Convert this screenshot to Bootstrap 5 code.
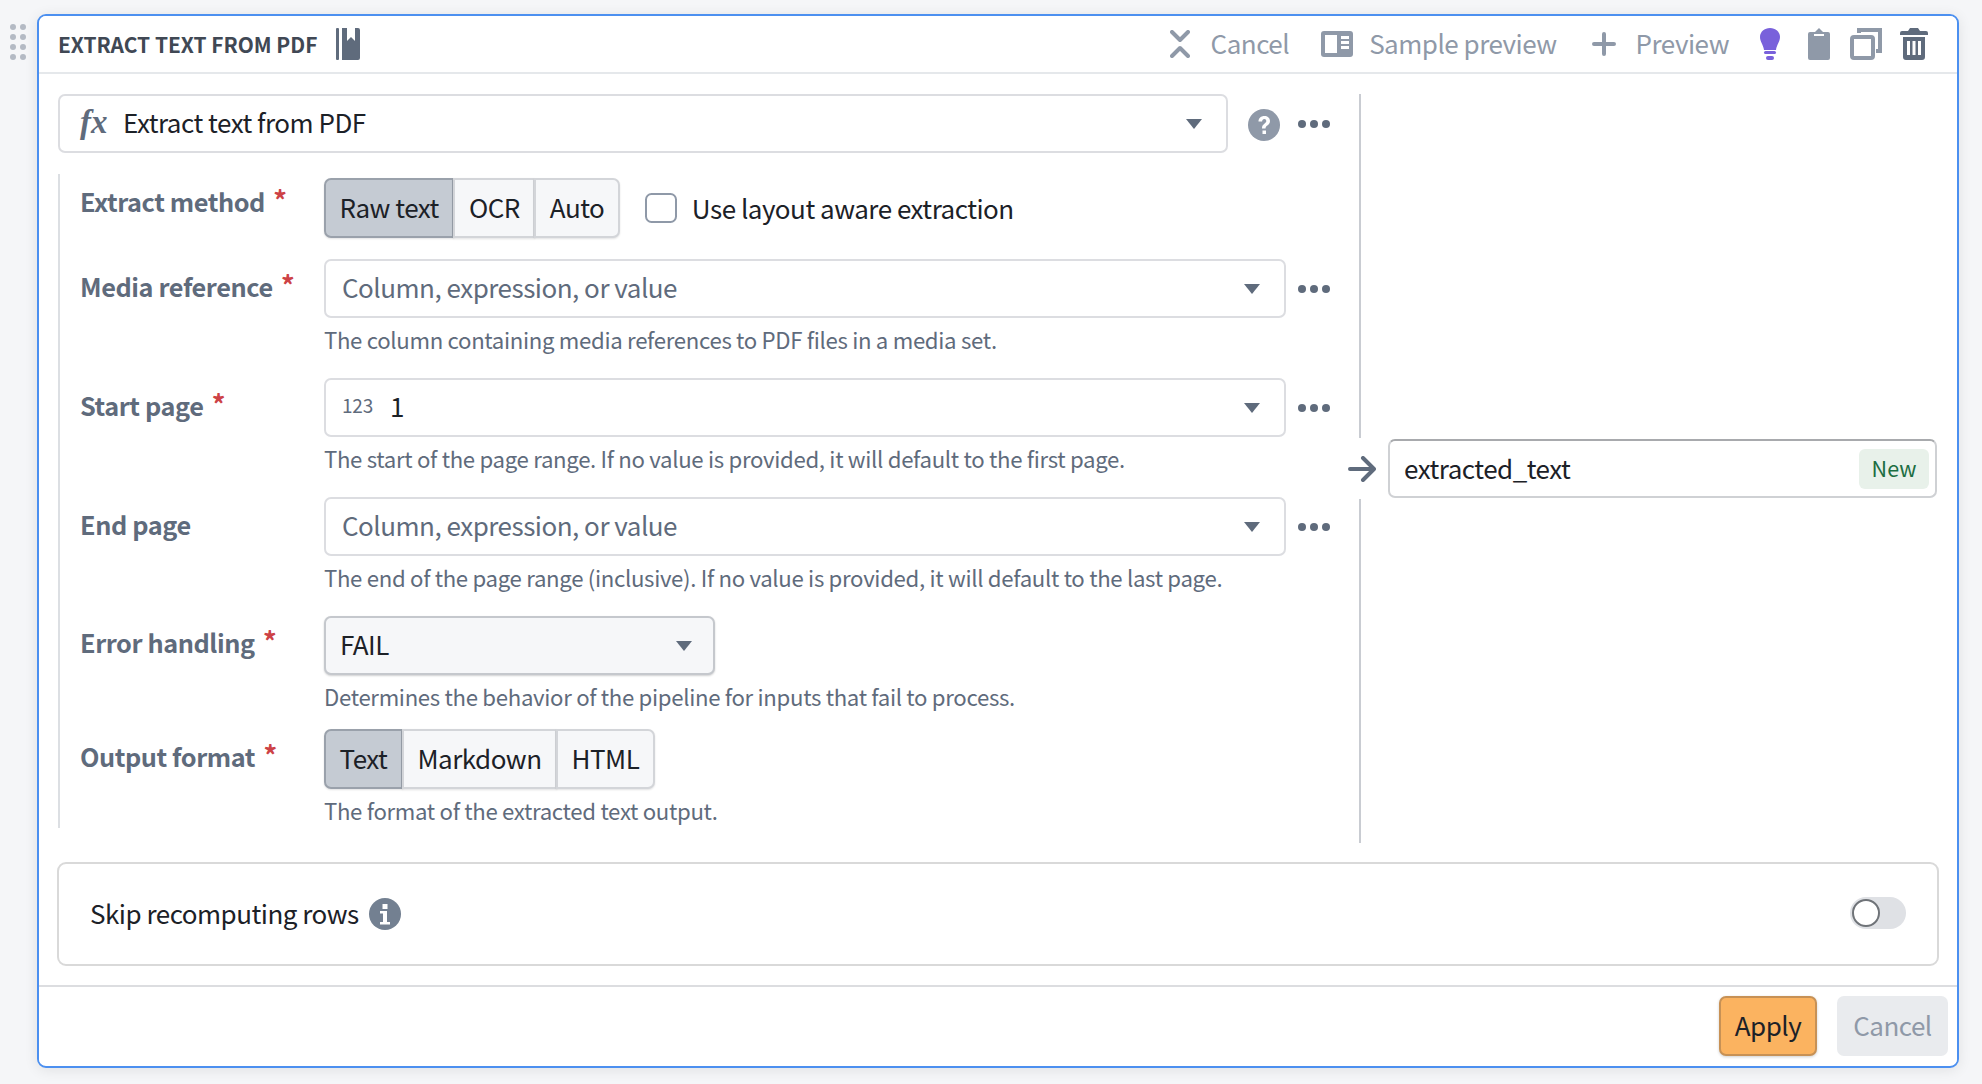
<!doctype html>
<html lang="en">
<head>
<meta charset="utf-8">
<title>Extract text from PDF</title>
<link href="https://cdn.jsdelivr.net/npm/bootstrap@5.3.0/dist/css/bootstrap.min.css" rel="stylesheet">
<style>
html,body{height:100%;margin:0}
body{background:#f5f6f8;font-family:"Noto Sans CJK SC","Noto Sans",sans-serif;color:#1c2127;font-size:26px;letter-spacing:-.5px;overflow:hidden}
.stage{padding:14px 0 0 0}
.grip{width:37px;padding:8px 0 0 10px;flex:none}
.grip svg{display:block}
.panel-card{width:1922px;height:1054px;border:2px solid #4c90f0;border-radius:9px;background:#fff;box-shadow:0 2px 14px rgba(17,20,24,.09);overflow:hidden}
.head-bar{height:58px;padding:0 29px 0 19px;background:#fff;border-bottom:2px solid #e5e8eb;border-radius:0}
.head-title{font-size:20.9px;font-weight:600;color:#404854;margin-right:19px;letter-spacing:0;padding-top:1px}
.head-act{color:#8f99a8;font-size:26px;line-height:1}
.head-act span{padding-bottom:2px}
.main-body{padding:20px 0 0 19px;height:788px}
.left-col{width:1282px;flex:none}
.field-box{height:59px;border:2px solid #dcdde1;border-radius:7px;background:#fff;padding:0 16px}
.field-box span{padding-bottom:4px}
.fn-box{width:1170px;padding-left:20px}
.ph{color:#5f6b7c}
.field-box .fx-mark{font-family:"Liberation Serif",serif;font-style:italic;font-weight:700;font-size:33px;color:#5f6b7c;line-height:1;width:39px;letter-spacing:0;padding-bottom:2px}
.dots-btn{width:32px;flex:none}
.form-area{border-left:2px solid #dcdfe3;margin-top:21px;padding:4px 0 0 20px;height:654px}
.frow{display:flex}
.flabel{width:244px;flex:none;font-weight:600;color:#5f6b7c;font-size:25.3px;letter-spacing:-.42px;line-height:36px;white-space:nowrap;padding-top:5px}
.flabel b{color:#cd4246;font-weight:600;font-size:27px;margin-left:3px;position:relative;top:-1px}
.fctl{width:962px;flex:none}
.hint{font-size:22.2px;letter-spacing:-.32px;line-height:30px;margin-top:6px;color:#5f6b7c;white-space:nowrap}
.seg .btn{background:#f6f7f9;border:2px solid #d3d5d9;color:#1c2127;font-size:26px;letter-spacing:-.5px;line-height:1;height:60px;padding:0 13.5px 2px;box-shadow:0 1px 2px rgba(17,20,24,.12);border-radius:7px}
.seg .btn.sel{background:#c5cbd3;border-color:#9aa1ab}
.seg .btn+.btn{margin-left:-2px}
.check-big{width:32px;height:30px;margin:0 0 0 25px !important;border:2px solid #8f99a8;border-radius:6px;background-color:#fff;flex:none}
.sel-box{width:391px;height:59px;background:#f6f7f9;border:2px solid #c5c8cd;border-radius:7px;padding:0 21px 0 14px;box-shadow:0 1px 2px rgba(17,20,24,.2)}
.sel-box span{padding-bottom:4px}
.mid-col{width:40px;flex:none;height:749px}
.vline{flex:1;width:2px;background:#c9ccd2}
.gap-slot{height:61px}
.gap-slot svg{margin-left:4px}
.out-wrap{width:549px;height:59px;margin:345px 0 0 8px;border:2px solid #cfd1d4;border-top-color:#a8aaad;border-radius:7px;padding:0 6px 0 14px}
.out-wrap>span:first-child{padding-bottom:2px}
.new-tag{background:#e8f1ea;color:#1c6e42;font-size:21.5px;letter-spacing:0;width:70px;height:40px;border-radius:6px}
.skip-box{margin:0 18px;height:104px;border:2px solid #d9d9d9;border-radius:9px;padding:0 31px 0 31px}
.skip-box span{font-size:26px;padding-bottom:4px}
.switch-ctl{width:56px !important;height:32px;margin:0 0 2px !important;background-color:#dfe1e5;border:0;border-radius:16px;background-position:left center;background-size:32px 32px;background-repeat:no-repeat;background-image:url("data:image/svg+xml,%3Csvg xmlns='http://www.w3.org/2000/svg' viewBox='0 0 32 32'%3E%3Ccircle cx='16' cy='16' r='13' fill='%23fff' stroke='%236f7378' stroke-width='2'/%3E%3C/svg%3E") !important;float:none !important}
.foot-bar{height:80px;margin-top:19px;background:#fff;border-top:2px solid #dcdde0;padding:9px 9px 0 0;border-radius:0;gap:20px}
.btn-apply,.btn-apply:hover{background:#fbb360;border:2px solid #c79155;color:#1c2127;font-size:26px;letter-spacing:-.5px;line-height:1;width:98px;height:60px;padding:0 0 2px;border-radius:7px;box-shadow:0 1px 3px rgba(17,20,24,.2)}
.btn-off,.btn-off:disabled{background:#e9ebee;border:0;color:#8f99a8;opacity:1;font-size:26px;letter-spacing:-.5px;line-height:1;width:111px;height:60px;padding:0 0 2px;border-radius:7px}
.r-media{margin-top:21px}
.r-media .flabel,.r-start .flabel,.r-end .flabel{padding-top:9px}
.r-media .hint,.r-start .hint,.r-end .hint{margin-bottom:24px}
.r-err .flabel{padding-top:8px}
.r-err .hint{margin-bottom:18px}
.r-out .flabel{padding-top:9px}
.field-box .num-tag{font-size:19px;width:40px;letter-spacing:-.2px}
.act-gap-a{margin-left:32px}
.act-gap-b{margin-left:16px}
.act-gap-c{margin-left:35px}
.act-gap-d{margin-left:20px}
.act-gap-e{margin-left:31px}
.act-gap-f{margin-left:28px}
.act-gap-g{margin-left:20px}
.act-gap-h{margin-left:18px}
.cancel-lbl{margin-left:21px}
.q-icon{margin-left:20px;margin-top:2px}
.dots-first{margin-left:18px}
.dots-row{margin-left:12px}
.use-lbl{margin-left:15px;padding-bottom:2px}
.info-icon{margin-left:10px}
</style>
</head>
<body>
<div class="stage d-flex">
  <div class="grip">
    <svg width="18" height="42" viewBox="0 0 18 42" fill="#b4bac4"><circle cx="3" cy="5" r="3"/><circle cx="13" cy="5" r="3"/><circle cx="3" cy="15" r="3"/><circle cx="13" cy="15" r="3"/><circle cx="3" cy="25" r="3"/><circle cx="13" cy="25" r="3"/><circle cx="3" cy="35" r="3"/><circle cx="13" cy="35" r="3"/></svg>
  </div>
  <div class="card panel-card">
    <div class="card-header head-bar d-flex align-items-center">
      <span class="head-title">EXTRACT TEXT FROM PDF</span>
      <svg width="24" height="32" viewBox="0 0 24 32" fill="#5f6b7c"><rect x="0" y="0" width="3" height="32" rx="1"/><path d="M6 0h5v13l4-4 4 4V0h3a2 2 0 0 1 2 2v28a2 2 0 0 1-2 2H6z"/></svg>
      <div class="ms-auto d-flex align-items-center head-act">
        <svg width="20" height="28" viewBox="0 0 20 28" fill="none" stroke="#8f99a8" stroke-width="4" stroke-linecap="round" stroke-linejoin="round"><path d="M2 2l8 8 8-8M2 26l8-8 8 8"/></svg>
        <span class="cancel-lbl">Cancel</span>
        <svg class="act-gap-a" width="32" height="26" viewBox="0 0 32 26"><rect width="32" height="26" rx="3" fill="#8f99a8"/><rect x="4" y="4" width="12" height="18" fill="#fff"/><path d="M20 5h8v3h-8zM20 10h8v3h-8zM20 15h8v3h-8z" fill="#fff"/></svg>
        <span class="act-gap-b">Sample preview</span>
        <svg class="act-gap-c" width="24" height="24" viewBox="0 0 24 24" stroke="#8f99a8" stroke-width="4" stroke-linecap="round"><path d="M12 2v20M2 12h20"/></svg>
        <span class="act-gap-d">Preview</span>
        <svg class="act-gap-e" width="20" height="32" viewBox="0 0 20 32" fill="#7961db"><path d="M10 0c5.500 0 10 3.800 10 9 0 4.800-3.300 7.700-4 13H4C3.300 16.700 0 13.800 0 9 0 3.800 4.500 0 10 0z"/><rect x="4" y="23" width="12" height="3" rx="1.500"/><rect x="6" y="28" width="8" height="4" rx="2"/></svg>
        <svg class="act-gap-f" width="22" height="32" viewBox="0 0 22 32" fill="#8f99a8"><path d="M2 4h5l4-4 4 4h5a2 2 0 0 1 2 2v24a2 2 0 0 1-2 2H2a2 2 0 0 1-2-2V6a2 2 0 0 1 2-2z"/><path d="M6 7h10" stroke="#fff" stroke-width="2"/></svg>
        <svg class="act-gap-g" width="32" height="32" viewBox="0 0 32 32" fill="none" stroke="#8f99a8" stroke-width="4"><rect x="2" y="9" width="21" height="21" rx="2"/><path d="M9 5V2h21v21h-4" /></svg>
        <svg class="act-gap-h" width="28" height="32" viewBox="0 0 28 32" fill="#5f6b7c"><path d="M10 0h8l2 3h6a2 2 0 0 1 2 2v2H0V5a2 2 0 0 1 2-2h6z"/><path fill-rule="evenodd" d="M3 9h22v20a3 3 0 0 1-3 3H6a3 3 0 0 1-3-3zM7 13v14h3V13zM12.500 13v14h3V13zM18 13v14h3V13z"/></svg>
      </div>
    </div>

    <div class="main-body d-flex">
      <div class="left-col">
        <div class="d-flex align-items-center">
          <div class="field-box fn-box d-flex align-items-center">
            <span class="fx-mark">fx</span><span class="ms-1">Extract text from PDF</span>
            <svg class="ms-auto me-2" width="16" height="10" viewBox="0 0 16 10" fill="#5f6b7c"><path d="M0 0h16L8 10z"/></svg>
          </div>
          <svg class="q-icon" width="32" height="32" viewBox="0 0 32 32"><circle cx="16" cy="16" r="16" fill="#8f99a8"/><path d="M10.500 12.500c0-3.300 2.500-5.500 5.800-5.500s5.700 2 5.700 5c0 4.300-4.500 4.300-4.500 7.500h-3.500c0-5 4.300-4.800 4.300-7.500 0-1.200-.8-2-2-2s-2.100.9-2.200 2.500z" fill="#fff"/><rect x="14.500" y="21.500" width="3.500" height="3.500" fill="#fff"/></svg>
          <svg class="dots-btn dots-first" height="8" viewBox="0 0 32 8" fill="#5f6b7c"><circle cx="4" cy="4" r="4"/><circle cx="16" cy="4" r="4"/><circle cx="28" cy="4" r="4"/></svg>
        </div>

        <div class="form-area">
          <div class="frow">
            <div class="flabel">Extract method <b>*</b></div>
            <div class="d-flex align-items-center">
              <div class="btn-group seg" role="group">
                <button type="button" class="btn sel">Raw text</button>
                <button type="button" class="btn">OCR</button>
                <button type="button" class="btn">Auto</button>
              </div>
              <input class="form-check-input check-big" type="checkbox" aria-label="Use layout aware extraction">
              <span class="use-lbl">Use layout aware extraction</span>
            </div>
          </div>

          <div class="frow r-media">
            <div class="flabel">Media reference <b>*</b></div>
            <div>
              <div class="d-flex align-items-center">
                <div class="field-box fctl d-flex align-items-center"><span class="ph">Column, expression, or value</span>
                  <svg class="ms-auto me-2" width="16" height="10" viewBox="0 0 16 10" fill="#5f6b7c"><path d="M0 0h16L8 10z"/></svg></div>
                <svg class="dots-btn dots-row" height="8" viewBox="0 0 32 8" fill="#5f6b7c"><circle cx="4" cy="4" r="4"/><circle cx="16" cy="4" r="4"/><circle cx="28" cy="4" r="4"/></svg>
              </div>
              <div class="hint">The column containing media references to PDF files in a media set.</div>
            </div>
          </div>

          <div class="frow r-start">
            <div class="flabel">Start page <b>*</b></div>
            <div>
              <div class="d-flex align-items-center">
                <div class="field-box fctl d-flex align-items-center"><span class="ph num-tag">123</span><span class="ms-2">1</span>
                  <svg class="ms-auto me-2" width="16" height="10" viewBox="0 0 16 10" fill="#5f6b7c"><path d="M0 0h16L8 10z"/></svg></div>
                <svg class="dots-btn dots-row" height="8" viewBox="0 0 32 8" fill="#5f6b7c"><circle cx="4" cy="4" r="4"/><circle cx="16" cy="4" r="4"/><circle cx="28" cy="4" r="4"/></svg>
              </div>
              <div class="hint">The start of the page range. If no value is provided, it will default to the first page.</div>
            </div>
          </div>

          <div class="frow r-end">
            <div class="flabel">End page</div>
            <div>
              <div class="d-flex align-items-center">
                <div class="field-box fctl d-flex align-items-center"><span class="ph">Column, expression, or value</span>
                  <svg class="ms-auto me-2" width="16" height="10" viewBox="0 0 16 10" fill="#5f6b7c"><path d="M0 0h16L8 10z"/></svg></div>
                <svg class="dots-btn dots-row" height="8" viewBox="0 0 32 8" fill="#5f6b7c"><circle cx="4" cy="4" r="4"/><circle cx="16" cy="4" r="4"/><circle cx="28" cy="4" r="4"/></svg>
              </div>
              <div class="hint">The end of the page range (inclusive). If no value is provided, it will default to the last page.</div>
            </div>
          </div>

          <div class="frow r-err">
            <div class="flabel">Error handling <b>*</b></div>
            <div>
              <div class="sel-box d-flex align-items-center"><span>FAIL</span>
                <svg class="ms-auto" width="16" height="10" viewBox="0 0 16 10" fill="#5f6b7c"><path d="M0 0h16L8 10z"/></svg></div>
              <div class="hint">Determines the behavior of the pipeline for inputs that fail to process.</div>
            </div>
          </div>

          <div class="frow r-out">
            <div class="flabel">Output format <b>*</b></div>
            <div>
              <div class="btn-group seg" role="group">
                <button type="button" class="btn sel">Text</button>
                <button type="button" class="btn">Markdown</button>
                <button type="button" class="btn">HTML</button>
              </div>
              <div class="hint">The format of the extracted text output.</div>
            </div>
          </div>
        </div>
      </div>

      <div class="mid-col d-flex flex-column align-items-center">
        <div class="vline"></div>
        <div class="gap-slot d-flex align-items-center">
          <svg width="28" height="26" viewBox="0 0 28 26" fill="none" stroke="#5f6b7c" stroke-width="4" stroke-linecap="round" stroke-linejoin="round"><path d="M2 13h23M15 2l11 11-11 11"/></svg>
        </div>
        <div class="vline"></div>
      </div>

      <div class="out-wrap d-flex align-items-center">
        <span>extracted_text</span>
        <span class="new-tag ms-auto d-flex align-items-center justify-content-center">New</span>
      </div>
    </div>

    <div class="skip-box d-flex align-items-center">
      <span>Skip recomputing rows</span>
      <svg class="info-icon" width="32" height="32" viewBox="0 0 32 32"><circle cx="16" cy="16" r="16" fill="#738091"/><rect x="13.500" y="6" width="5" height="5" fill="#fff"/><path d="M11 13h7v11h3v2.500H11V24h3v-8.500h-3z" fill="#fff"/></svg>
      <div class="form-check form-switch ms-auto p-0 m-0 d-flex">
        <input class="form-check-input switch-ctl" type="checkbox" role="switch" aria-label="Skip recomputing rows">
      </div>
    </div>

    <div class="card-footer foot-bar d-flex justify-content-end">
      <button type="button" class="btn btn-apply">Apply</button>
      <button type="button" class="btn btn-off" disabled>Cancel</button>
    </div>
  </div>
</div>
</body>
</html>
